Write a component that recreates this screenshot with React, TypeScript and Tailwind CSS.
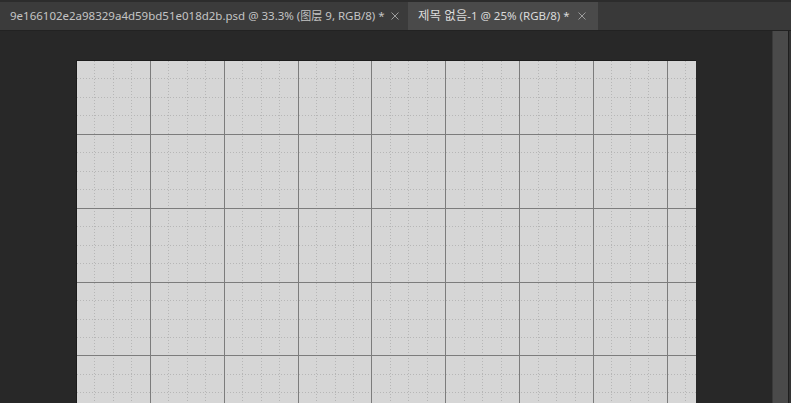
const MAJOR = 73.86
const CANVAS_W = 619
const CANVAS_H = 342

function Grid() {
  const majorsX: number[] = []
  const minorsX: number[] = []
  const majorsY: number[] = []
  const minorsY: number[] = []
  for (let i = 1; i * (MAJOR / 4) < CANVAS_W + 1; i++) {
    const v = Math.round(i * (MAJOR / 4)) - 1
    if (i % 4 === 0) majorsX.push(v)
    else minorsX.push(v)
  }
  for (let i = 1; i * (MAJOR / 4) < CANVAS_H + 1; i++) {
    const v = Math.round(i * (MAJOR / 4)) - 1
    if (i % 4 === 0) majorsY.push(v)
    else minorsY.push(v)
  }

  return (
    <svg width={CANVAS_W} height={CANVAS_H} className="block">
      <rect width={CANVAS_W} height={CANVAS_H} fill="#d6d6d6" />
      {minorsX.map((x) => (
        <line key={`mx${x}`} x1={x + 0.5} y1={0} x2={x + 0.5} y2={CANVAS_H} stroke="#b6b6b6" strokeDasharray="1 2" />
      ))}
      {minorsY.map((y) => (
        <line key={`my${y}`} x1={0} y1={y + 0.5} x2={CANVAS_W} y2={y + 0.5} stroke="#b6b6b6" strokeDasharray="1 2" />
      ))}
      {majorsX.map((x) => (
        <line key={`Mx${x}`} x1={x + 0.5} y1={0} x2={x + 0.5} y2={CANVAS_H} stroke="#7c7c7c" />
      ))}
      {majorsY.map((y) => (
        <line key={`My${y}`} x1={0} y1={y + 0.5} x2={CANVAS_W} y2={y + 0.5} stroke="#7c7c7c" />
      ))}
    </svg>
  )
}

function CloseX() {
  return (
    <svg width="8" height="8" viewBox="0 0 8 8" className="block">
      <path d="M0.5 0.5L7.5 7.5M7.5 0.5L0.5 7.5" stroke="#9c9c9c" strokeWidth="1" />
    </svg>
  )
}

export default function App() {
  return (
    <div
      className="w-[791px] h-[403px] overflow-hidden bg-[#282828] flex flex-col"
      style={{ fontFamily: '"Noto Sans", "Noto Sans CJK KR", "Noto Sans CJK SC", sans-serif' }}
    >
      {/* Document tabs */}
      <div className="h-[31px] flex-shrink-0 bg-[#393939] border-t-2 border-[#2c2c2c] border-b border-b-[#222] flex items-stretch">
        <div className="w-[408px] flex items-center pl-[10px] text-[11.5px] text-[#c4c4c4] bg-[#3b3b3b]">
          <span className="whitespace-nowrap">
            9e166102e2a98329a4d59bd51e018d2b.psd @ 33.3% (<span className="text-[11px]">图层</span> 9, RGB/8) *
          </span>
          <span className="ml-[6px]">
            <CloseX />
          </span>
        </div>
        <div className="w-[190px] flex items-center pl-[10px] text-[11.5px] text-[#dadada] bg-[#4a4a4a]">
          <span className="whitespace-nowrap">
            <span className="text-[12.5px]">제목 없음</span>-1 @ 25% (RGB/8) *
          </span>
          <span className="ml-[8px]">
            <CloseX />
          </span>
        </div>
        <div className="flex-1" />
      </div>

      {/* Workspace */}
      <div className="flex-1 flex min-h-0">
        <div className="flex-1 pl-[76px] pt-[29px] overflow-hidden">
          <div className="w-[620px] border-l border-t border-[#1c1c1c]">
            <Grid />
          </div>
        </div>
        <div className="w-[16px] bg-[#4a4a4a] border-l border-[#3a3a3a]" />
        <div className="w-[3px] bg-[#333] border-l border-[#1e1e1e]" />
      </div>
    </div>
  )
}
